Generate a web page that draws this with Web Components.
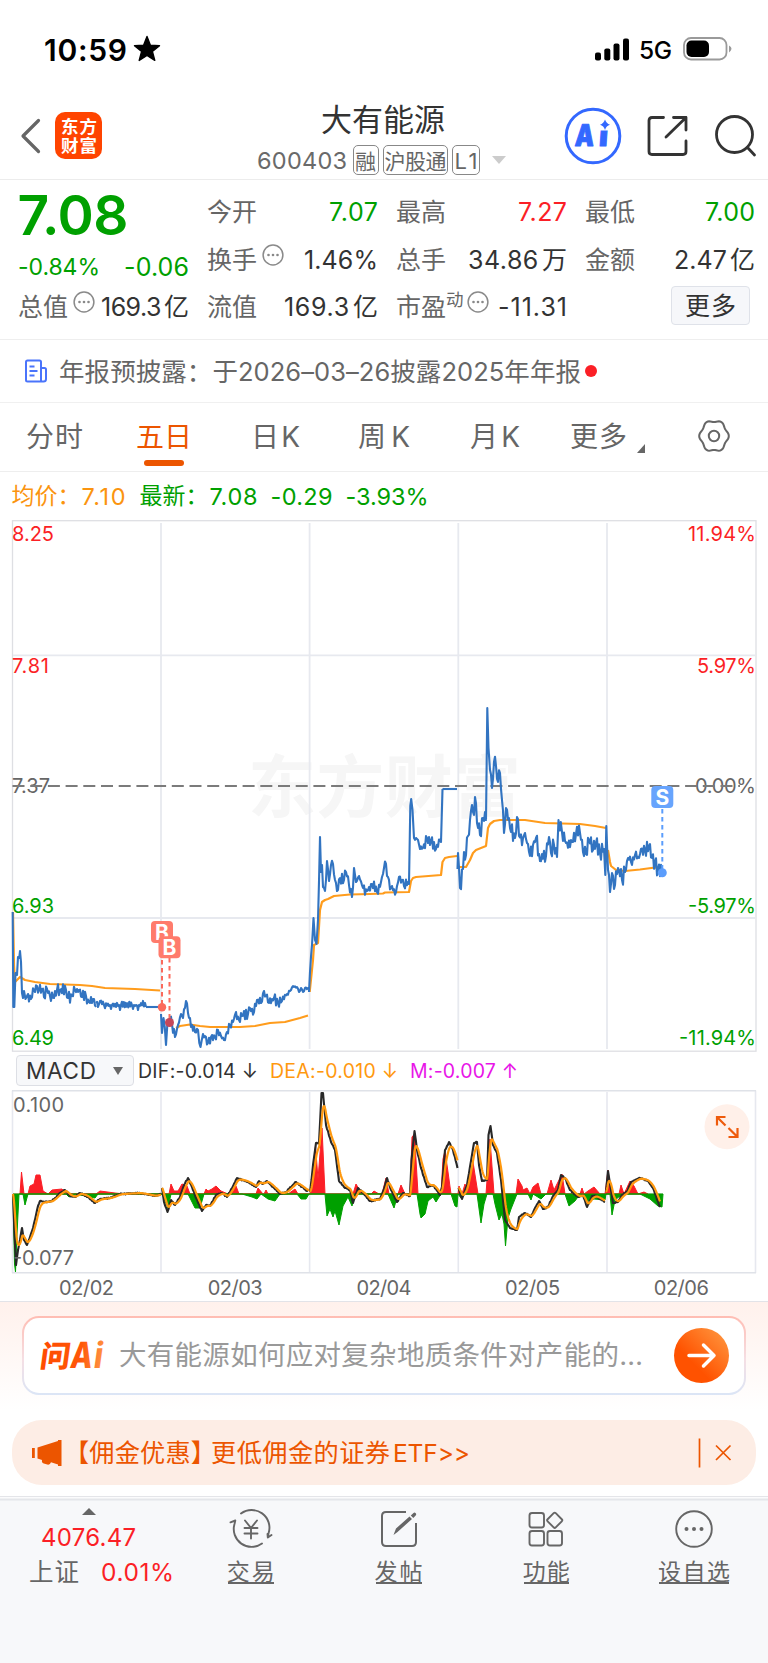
<!DOCTYPE html>
<html lang="zh-CN">
<head>
<meta charset="utf-8">
<title>大有能源 600403</title>
<style>
html,body{margin:0;padding:0;background:#fff}
body{width:768px;height:1663px;overflow:hidden;font-family:Inter,"Noto Sans CJK SC",sans-serif;color:#333;text-autospace:normal}
</style>
</head>
<body>
<stock-page></stock-page>
<script>
const define = (name, html, setup) => customElements.define(name, class extends HTMLElement {
  connectedCallback() {
    if (this.shadowRoot) return;
    this.attachShadow({mode: 'open'}).innerHTML = html;
    if (setup) setup.call(this, this.shadowRoot);
  }
});

/* Single line of text: s = size, w = ink width to justify to, c = colour, b = weight */
define('t-x', `<style>:host{display:block;flex:none;white-space:nowrap;line-height:1}span{display:inline-block;margin:1px 0 -1px -1px}</style><span><slot></slot></span>`, function (root) {
  const a = n => this.getAttribute(n);
  if (a('s')) this.style.fontSize = a('s') + 'px';
  if (a('s')) this.style.height = a('s') + 'px';
  if (a('c')) this.style.color = a('c');
  if (a('b')) this.style.fontWeight = a('b');
  if (a('w')) {
    const span = root.querySelector('span'), n = this.textContent.length, w = +a('w');
    span.style.letterSpacing = (w + 2 - span.getBoundingClientRect().width) / Math.max(1, n - 1) + 'px';
    this.style.width = w + 'px';
  }
});

define('status-bar', `<style>
:host{display:flex;align-items:center;height:97px;box-sizing:border-box;padding:1px 36px 0 45px;color:#000}
.star{margin-left:7px}.r{margin-left:auto;display:flex;align-items:center}
svg{display:block}</style>
<t-x s="30" w="81" b="600">10:59</t-x>
<svg class="star" width="28" height="28" viewBox="0 0 28 28"><path d="M14 1.5l3.3 8.6 9.2.5-7.1 5.8 2.4 9-7.8-5-7.8 5 2.4-9-7.1-5.8 9.2-.5z" stroke="#000" stroke-width="1.4" stroke-linejoin="round"/></svg>
<div class="r">
<svg width="34" height="23" viewBox="0 0 34 23"><rect y="14.500" width="6" height="8" rx="2"/><rect x="9.300" y="10.500" width="6" height="12" rx="2"/><rect x="18.500" y="5.500" width="6" height="17" rx="2"/><rect x="28" y=".5" width="6" height="22" rx="2"/></svg>
<t-x s="24.500" w="31" b="500" style="margin:1px 12px 0 11px">5G</t-x>
<svg width="49" height="24" viewBox="0 0 49 24"><rect x="1" y="1" width="42.500" height="21.500" rx="7" fill="none" stroke="#9a9a9a" stroke-width="1.800"/><rect x="3.500" y="3.600" width="22.500" height="16.300" rx="5"/><path d="M46 8.500q5 3 0 7z" fill="#9a9a9a"/></svg>
</div>`);

define('brand-logo', `<style>:host{display:grid;place-content:center;justify-items:center;gap:1.500px;width:47px;height:47px;border-radius:10px;background:#ff4400;color:#fff}t-x{margin:-.5px 0 .5px 1px}</style>
<t-x s="17.500" w="34" b="700">东方</t-x><t-x s="17.500" w="34" b="700">财富</t-x>`);

define('tag-box', `<style>:host{display:flex;align-items:center;justify-content:center;box-sizing:border-box;height:30px;border:1.500px solid #888;border-radius:5px;color:#666;margin-left:4px}</style><slot></slot>`);

define('title-bar', `<style>
:host{display:flex;height:83px;box-sizing:border-box;border-bottom:1.500px solid #ececec;align-items:flex-start;padding-left:20px}
svg{display:block;flex:none}.back{margin:21px 13px 0 0}brand-logo{margin-top:15px}
.mid{width:249px;margin-left:156px;padding-top:6px}.row{display:flex;align-items:center;margin-top:11px}
.ai{margin:10px 0 0 57px}.share{margin:18px 0 0 25px}.find{margin:17px 0 0 25px}</style>
<svg class="back" width="22" height="36" viewBox="0 0 22 36"><path d="M18.500 2.500L3 18l15.500 15.500" fill="none" stroke="#666" stroke-width="3.200" stroke-linecap="round" stroke-linejoin="round"/></svg>
<brand-logo></brand-logo>
<div class="mid"><t-x s="31" w="122" c="#333" style="margin-left:64px">大有能源</t-x>
<div class="row"><t-x s="23.500" w="88" c="#6a6a6a">600403</t-x><tag-box style="width:26px;margin-left:7px"><t-x s="21" w="20">融</t-x></tag-box><tag-box style="width:65px"><t-x s="21" w="60">沪股通</t-x></tag-box><tag-box style="width:28px"><t-x s="22" w="21">L1</t-x></tag-box><svg width="14" height="8" style="margin-left:12px" viewBox="0 0 14 8"><path d="M0 0h14L7 8z" fill="#ccc"/></svg></div></div>
<svg class="ai" width="58" height="58" viewBox="0 0 58 58"><circle cx="29" cy="29" r="26.800" fill="none" stroke="#3368ff" stroke-width="3"/><text transform="translate(10.500 39) skewX(-4)" font-family="Inter" font-weight="900" font-size="30" fill="#3368ff" stroke="#3368ff" stroke-width="1" stroke-linejoin="round"><tspan textLength="19" lengthAdjust="spacingAndGlyphs">A</tspan><tspan x="24">i</tspan></text><path d="M33 11h13v12.500H33z" fill="#fff"/><path d="M41 12.500q1.300 4.100 5 5.200-3.700 1.100-5 5.200-1.300-4.100-5-5.200 3.700-1.100 5-5.200z" fill="#3368ff"/></svg>
<svg class="share" width="42" height="42" viewBox="0 0 42 42"><g fill="none" stroke="#333" stroke-width="2.800" stroke-linecap="round" stroke-linejoin="round"><path d="M16.500 2.500H5q-3 0-3 3v31q0 3 3 3h31q3 0 3-3V26"/><path d="M26.500 2.500H39V15M39 2.500L19 22"/></g></svg>
<svg class="find" width="44" height="44" viewBox="0 0 44 44"><g fill="none" stroke="#333" stroke-width="2.800" stroke-linecap="round"><circle cx="20.500" cy="20.500" r="18"/><path d="M33.500 33.500l7 7.500"/></g></svg>`);

define('info-dot', `<style>:host{display:block;flex:none;width:22px;height:22px}svg{display:block}</style><svg width="22" height="22" viewBox="0 0 22 22"><circle cx="11" cy="11" r="9.900" fill="none" stroke="#8a8a8a" stroke-width="1.500"/><g fill="#888"><circle cx="6.500" cy="11" r="1.300"/><circle cx="11" cy="11" r="1.300"/><circle cx="15.500" cy="11" r="1.300"/></g></svg>`);

define('quote-cell', `<style>:host{display:flex;align-items:center;height:47.500px}.v{margin-left:auto}</style><slot name="k"></slot><slot name="x"></slot><div class="v"><slot></slot></div>`);

define('quote-panel', `<style>
:host{display:block;height:160px;box-sizing:border-box;border-bottom:1.500px solid #eee;padding:8px 14px 0 19px}
.g{display:grid;grid-template-columns:169px 169px 169px 168px;column-gap:20px}
.p{display:flex;justify-content:space-between}
info-dot{margin:-9px 0 0 6px}
.btn{width:79px;height:39px;box-sizing:border-box;border:1.500px solid #dfe2e9;border-radius:4px;background:#f6f7fa;display:grid;place-items:center;margin:-2px 4px 0 0}</style>
<div class="g">
<div><t-x s="55" w="109" b="600" c="#00a000" style="margin:-1px 0 0 -.5px">7.08</t-x><div class="p" style="height:26px;align-items:center;margin-top:11px"><t-x s="23" w="80" c="#00a000">-0.84%</t-x><t-x s="25" w="63" c="#00a000">-0.06</t-x></div>
<quote-cell style="margin-top:3.500px"><t-x slot="k" s="25" w="48" c="#666">总值</t-x><info-dot slot="x" style="margin-left:6px"></info-dot><t-x s="25" w="86">169.3亿</t-x></quote-cell></div>
<div><quote-cell><t-x slot="k" s="25" w="48" c="#666">今开</t-x><t-x s="25" w="47" c="#00a000">7.07</t-x></quote-cell>
<quote-cell><t-x slot="k" s="25" w="48" c="#666">换手</t-x><info-dot slot="x"></info-dot><t-x s="25" w="72">1.46%</t-x></quote-cell>
<quote-cell><t-x slot="k" s="25" w="48" c="#666">流值</t-x><t-x s="25" w="92">169.3亿</t-x></quote-cell></div>
<div><quote-cell><t-x slot="k" s="25" w="48" c="#666">最高</t-x><t-x s="25" w="47" c="#fb1f26">7.27</t-x></quote-cell>
<quote-cell><t-x slot="k" s="25" w="48" c="#666">总手</t-x><t-x s="25" w="97">34.86万</t-x></quote-cell>
<quote-cell><t-x slot="k" s="25" w="48" c="#666">市盈</t-x><t-x slot="x" s="17.500" w="17" c="#666" style="margin:-17px 0 0 2px">动</t-x><info-dot slot="x" style="margin-left:3px"></info-dot><t-x s="25" w="67">-11.31</t-x></quote-cell></div>
<div><quote-cell><t-x slot="k" s="25" w="48" c="#666">最低</t-x><t-x s="25" w="48" c="#00a000">7.00</t-x></quote-cell>
<quote-cell><t-x slot="k" s="25" w="48" c="#666">金额</t-x><t-x s="25" w="79">2.47亿</t-x></quote-cell>
<quote-cell><div class="btn"><t-x s="25" w="49">更多</t-x></div></quote-cell></div>
</div>`);

define('notice-line', `<style>:host{display:flex;align-items:center;height:62.500px;box-sizing:border-box;border-bottom:1.500px solid #f0f0f0;padding-left:24px;text-autospace:no-autospace}i{width:12px;height:12px;border-radius:6px;background:#fb1f26;margin:0 0 0 5px}</style>
<svg width="24" height="24" viewBox="0 0 24 24"><g fill="none" stroke="#4a74fb" stroke-width="2"><path d="M17 22.500H3.500q-1.500 0-1.500-1.500V3q0-1.500 1.500-1.500h12Q17 1.500 17 3zM17 9h3.500q1.500 0 1.500 1.500V20q0 2.500-2.500 2.500H17M5.500 7.500h5M5.500 12h8M5.500 16.500h5"/></g></svg>
<t-x s="25.500" w="520" c="#666" style="margin:-1px 0 0 12px">年报预披露：于2026–03–26披露2025年年报</t-x><i></i>`);

define('tab-item', `<style>:host{display:flex;flex-direction:column;align-items:center;flex:none;padding-top:19.500px}:host([on])::after{content:"";width:40px;height:6px;border-radius:3px;background:#ec5500;margin-top:9.500px}</style><slot></slot>`);

/* Gear outline with six soft lobes */
const gear = Array.from({length: 73}, (_, i) => {
  const t = i * Math.PI / 36, r = 13.8 + 1 * Math.cos(6 * t);
  return (17 + r * Math.cos(t)).toFixed(2) + ' ' + (17 + 1.09 * r * Math.sin(t)).toFixed(2);
}).join('L');

define('period-tabs', `<style>:host{display:flex;align-items:flex-start;height:69px;box-sizing:border-box;border-bottom:1.500px solid #eee;padding-left:27px;color:#666}tab-item+tab-item{margin-left:var(--g)}.tri{margin:41px 0 0 11px}.gear{margin:16.500px 0 0 52px}svg{display:block}</style>
<tab-item><t-x s="28" w="55">分时</t-x></tab-item>
<tab-item on style="--g:55px"><t-x s="28" w="54" c="#ec5500">五日</t-x></tab-item>
<tab-item style="--g:61px"><t-x s="28" w="47">日K</t-x></tab-item>
<tab-item style="--g:60px"><t-x s="28" w="50">周K</t-x></tab-item>
<tab-item style="--g:62px"><t-x s="28" w="48">月K</t-x></tab-item>
<tab-item style="--g:52px"><t-x s="28" w="55">更多</t-x></tab-item>
<svg class="tri" width="8" height="9" viewBox="0 0 8 9"><path d="M8 0v9H0z" fill="#666"/></svg>
<svg class="gear" width="34" height="34" viewBox="0 0 34 34"><g fill="none" stroke="#666" stroke-width="2"><path d="M${gear}Z"/><circle cx="17" cy="17" r="5.200"/></g></svg>`);

define('price-legend', `<style>:host{display:flex;align-items:center;height:48.500px;padding-left:12.500px;color:#00a000}</style>
<t-x s="23" w="67" c="#fb940f">均价：</t-x><t-x s="23.500" w="42" c="#fb940f" style="margin-left:3px">7.10</t-x>
<t-x s="23" w="67" style="margin-left:16px">最新：</t-x><t-x s="23.500" w="46" style="margin-left:3px">7.08</t-x><t-x s="23.500" w="60" style="margin-left:15px">-0.29</t-x><t-x s="23.500" w="81" style="margin-left:15px">-3.93%</t-x>`);

const parse = s => s.trim().split(/\s+/).map(p => p.split(',').map(Number));
const pts = a => a.map(p => p[0].toFixed(1) + ',' + p[1].toFixed(1)).join(' ');
let seed = 7;
const rnd = () => (seed = (seed * 16807) % 2147483647) / 2147483647;
/* Fill the gaps between the known ticks with small minute-by-minute moves */
const ticks = (s, amp) => {
  const k = parse(s), out = [k[0]];
  let sign = 1;
  for (let i = 1; i < k.length; i++) {
    const [x0, y0] = k[i - 1], [x1, y1] = k[i], n = Math.floor((x1 - x0) / .9);
    for (let j = 1; j < n; j++) {
      sign = -sign;
      out.push([x0 + (x1 - x0) * j / n, y0 + (y1 - y0) * j / n + sign * rnd() * amp * .7]);
    }
    out.push(k[i]);
  }
  return out;
};
const line = (a, c, w) => `<polyline points="${pts(a)}" fill="none" stroke="${c}" stroke-width="${w}" stroke-linejoin="round"/>`;

const PRICE = [
  ['12.7,912 13.3,1007 14.3,1007 15.5,973 17,975 18,957 19.2,958 20,951 21,962 22,993 23,998 24,991 25.5,999 28,994 31,999 34,990 37,986 39,990 42,989 44,997 47,989 50,996 54,998 57,990 60,990 66,990 68,998 72,996 75,990 79,990 82,997 86,996 89,1002 93,999 96,1007', 9],
  ['96,1003 98,1007 100,1001 104,1005 110,1005 111,1009 112,1005 119,1005 120,1010 121,1005 132,1005 133,1009 134,1005 136,1005 138,1010 139,1005 145,1003 146,1007', 5],
  ['146,1007 160,1007', 0],
  ['161,1014 162,1033 163.5,1018 166,1045 167.5,1022 170,1018 172,1024 175,1037 178,1025 181,1014 183,1018 186,1001 188,1013 190,1018 191,1027 195,1032 198,1030 200.5,1047 203,1034 206,1037 208,1043 212,1035 215,1037 218,1030 221,1036 224,1040 227,1032 230,1025 233,1022 236,1012 239,1020 242,1016 248,1014 250,1008 254,1012 257,1000 261,1003 264,991 266,996 269,1003 274,998 278,1003 282,1001 286,996', 7],
  ['286,996 290,991 293,986 297,987 299,992 301,988 303,992 305,988 309,988', 2],
  ['309,992 310,972 312,945 313.5,918 315,940 316.5,944 318,920 320,837 321,872 322,865 323,887 325,891 327,861 329,881 331,865 333,864 335,880 338,890 340,878 344,880 346,872 349,885 352,897 354,868 356,882 359,876 363,888 367,891 372,884 377,892 381,882 384,868 386,864 388,877 391,888 396,892 399,877 402,880 404,886 409,884 410.3,806 411.2,799 412.5,810 414,838 416,838 418,840 420,849 423,848 427,838 431,841 436,849 440,840 441,842 442.5,789', 8],
  ['442.5,789 457,789', 0],
  ['457.5,869 458,853 460,888 463,869 464,852 466,855 468,836 470,820 472,805 474,815 475,797 477,823 480,835 483,818 485,812 486,820 487.3,708 488.5,748 490,770 492,788 494,762 496,766 498,782 500,773 502,800 504,833 506,808 510,828 515,838 517,817 519,836 523,838 525,833 527,843 530,856 533,845 536,838 540,861 546,856 549,837 551,853 554,845 557,857 558.5,820 562,832 566,843 572,842 576,834 580,833 583,852 586,854 589,840 593,850 596,843 600,853 604,849 605.3,875 606.3,826 608,870 610,892 612,873 615,885 618,868 622,880 625,872 628,858 631,862 635,855 639,858 641,849 645,850 649,846 652,858 655,862 658,870 662,872', 12]
];
const AVERAGE = [
  '13,912 14,965 15,982 18,979 20,977 25,980 35,982 50,984 80,985 92,986 105,988 135,989 160,990.5',
  '176,1028 180,1026 190,1024.5 200,1026 210,1027 240,1027 255,1026 270,1023 285,1022 300,1018 308,1015.5',
  '309.7,992 313,960 314,945 318,943 320,910 322,902 325,900 328,899 334,896 350,894.5 370,894 383,893.5 385,892.5 409,892 411,881 413,878 416,877 441,875 442.5,862 445,858 449,857 457,856',
  '458,867 466,867 470,860 473,853 476,850 486,846 488,828 490,824 494,821 500,820 525,820 545,823 580,824 595,826 606,828',
  '608,850 610,862 611,866 616,870 625,871 640,869.5 655,867.5 660,868'
];
const label = (x, y, t, c, w, end, s = 20) => `<text x="${x}" y="${y}" fill="${c}" font-size="${s}" textLength="${w}" ${end ? 'text-anchor="end"' : ''}>${t}</text>`;
const R = '#fb1f26', G = '#00a000', D = '#666';

define('price-chart', `<style>:host{display:block;height:532px}svg{display:block}text{font-family:Inter,"Noto Sans CJK SC",sans-serif}</style>
<svg width="768" height="532" viewBox="0 520 768 532">
<text x="248" y="812" font-size="68" font-weight="700" textLength="273" fill="#f6f6f6">东方财富</text>
<g fill="none" stroke="#e7e9ef" stroke-width="1.800"><rect x="12.500" y="520.700" width="743.500" height="530.500" stroke="#dedfe3" stroke-width="1.300"/><path d="M161 523v526M309.600 523v526M458.300 523v526M607 523v526M13 655.300h742M13 918h742"/></g>
${label(12, 540.5, '8.25', R, 42)}${label(12, 673, '7.81', R, 37)}${label(12, 793, '7.37', D, 38)}${label(12, 912.5, '6.93', G, 42)}${label(12, 1044.5, '6.49', G, 42)}
${label(756, 540.5, '11.94%', R, 68, 1)}${label(756, 673, '5.97%', R, 59, 1)}${label(756, 793, '0.00%', D, 61, 1)}${label(756, 912.5, '-5.97%', G, 68, 1)}${label(756, 1044.5, '-11.94%', G, 77, 1)}
<path d="M12.500 786H740" stroke="#7b7b7b" stroke-width="2.200" stroke-dasharray="12 5.700"/>
${AVERAGE.map(a => line(parse(a), '#ff9c1c', 2.2)).join('')}
${PRICE.map(p => line(ticks(p[0], p[1]), '#3274c1', 2.1)).join('')}
<g stroke="#fb6a5c" stroke-width="2" stroke-dasharray="4.500 3.500"><path d="M162 944v60M169.500 958v62"/></g>
<circle cx="162" cy="1007.300" r="4.200" fill="#fb6a5c"/><circle cx="169.500" cy="1022.500" r="4.500" fill="#c4485a"/>
<g font-size="21" font-weight="700" text-anchor="middle"><rect x="151" y="921" width="22" height="22" rx="4" fill="#ff7b6c"/><text x="162" y="939.500" fill="#fff">B</text><rect x="158.500" y="936.300" width="22" height="22" rx="4" fill="#ff7b6c"/><text x="169.500" y="955" fill="#fff">B</text>
<path d="M662.300 809v60" stroke="#5b9dfc" stroke-width="2" stroke-dasharray="4.500 3.500"/><circle cx="662.300" cy="872.700" r="4.500" fill="#5b9dfc"/><rect x="651.300" y="786" width="22" height="22" rx="4" fill="#67a4fd"/><text x="662.300" y="804.700" fill="#fff">S</text></g>
</svg>`);

define('macd-legend', `<style>:host{display:flex;align-items:center;height:38px;padding-left:16px}.sel{display:flex;align-items:center;justify-content:space-between;box-sizing:border-box;width:118px;height:31px;padding:0 10px;border:1.300px solid #dddfe5;border-radius:4px;background:#f7f8fa;margin:-1px 5px 0 0}svg{display:block}</style>
<div class="sel"><t-x s="22.500" w="68">MACD</t-x><svg width="10" height="8" viewBox="0 0 10 8"><path d="M0 0h10L5 8z" fill="#666"/></svg></div>
<t-x s="19.500" w="118">DIF:-0.014 ↓</t-x><t-x s="19.500" w="126" c="#ff990f" style="margin-left:14px">DEA:-0.010 ↓</t-x><t-x s="19.500" w="106" c="#e815e8" style="margin-left:14px">M:-0.007 ↑</t-x>`);

const DIF = [
  '13,1194 14.5,1235 16,1265 18,1250 20,1240 22,1228 24,1240 27,1245 30,1237 33,1228 36,1215 38,1206 40,1201 45,1202 52,1201 60,1193 65,1190 70,1196 75,1197 80,1193 88,1197 95,1203 100,1199 110,1198 120,1194 140,1193 155,1196 161,1194',
  '162,1188 164,1202 167.5,1212 171,1200 175,1205 180,1197 184,1185 188,1178 192,1187 196,1198 202,1211 206,1205 210,1206 216,1195 222,1193 227,1197 232,1188 237,1178 248,1182 256,1187 259,1181 263,1184 267,1181 273,1187 280,1194 286,1192 292,1186 296,1182 302,1187 307,1191 309,1190',
  '310,1192 311.5,1180 313,1165 316,1143 319,1143 321.5,1093 323,1093 326,1125 331,1142 335,1150 339,1181 344,1187 350,1190 353,1203 358,1188 363,1193 370,1201 380,1199 384,1189 387,1178 391,1190 397,1202 403,1193 410,1196 411.5,1160 414.5,1131 417,1150 421,1168 427,1187 433,1185 440,1195 442,1187 445,1150 449,1142 453,1150 457.5,1168',
  '458.5,1188 462,1199 467,1185 472,1155 474,1143 477,1142 479,1165 482,1181 487,1180 488.5,1135 490.5,1126 493,1145 497,1153 501,1180 505,1220 510,1228 517,1230 519,1217 525,1213 531,1217 535,1208 539,1201 543,1209 548,1207 553,1196 558,1190 561,1175 565,1178 570,1190 578,1197 583,1195 587,1207 592,1196 596,1196 605,1202',
  '606,1192 608,1171 611,1190 613,1203 618,1202 622,1195 627,1192 631,1182 640,1178 648,1181 653,1188 660,1207'
];
/* Signal line: running average of the fast line */
const signal = a => {
  const k = parse(a), out = [];
  let e = k[0][1], i = 0;
  for (let x = k[0][0]; x <= k[k.length - 1][0]; x += .5) {
    while (i < k.length - 2 && k[i + 1][0] < x) i++;
    const [x0, y0] = k[i], [x1, y1] = k[i + 1];
    e += ((y0 + (y1 - y0) * (x - x0) / (x1 - x0)) - e) * .19;
    out.push([x, e]);
  }
  return out;
};
const RED = '20,0 21.5,-22 24,0 28,0 30,-8 34,-10 36,-19 40,-19 43,-3 48,0 52,-4 62,-5 67,0 96,0 100,-3 115,-1 125,0 169,0 171,-10 174,-3 178,-3 182,-10 187,-8 190,0 204,0 206,-5 208,-3 212,-5 216,-8 221,-3 228,0 232,-6 236,-8 239,0 256,0 258,-6 263,0 264,0 266,-4 268,0 288,0 295,-5 298,0 310,0 315.5,-48 318,-15 322,-66 325,0 353,0 356,-10 360,-3 363,0 371,0 374,-3 379,0 382,0 386,-16 389,0 398,0 401,-9 405,0 410,0 412,-57 414.5,-60 418,0 441,0 443,-35 445,-43 448,-22 451,0 458,0 459,-8 462,0 465,-10 467,-5 473,-32 478,0 486,0 490,-55 494,0 516,0 518,-15 522,-8 523,-4 527,-6 530,0 533,-7 538,-11 541,0 547,0 551,-14 554,-4 557,-10 562,-20 565,0 580,0 582,-6 584,0 588,-3 594,-7 600,0 605,0 608,-24 611,0 619,0 621,-9 624,0 630,-13 634,-8 638,0 644,-2 648,0';
const GREEN = '13,0 14.5,70 15.5,78 17,40 19,0 23,0 25,11 28,0 66,0 69,3 75,0 85,2 95,4 98,0 162,0 164,5 168,14 171,0 188,0 195,14 200,14 204,0 242,0 252,3 257,5 261,0 268,5 275,7 280,0 297,0 301,5 306,5 309,0 325,0 327,22 330,15 333,23 335,17 339,31 343,12 348,3 352,12 355,0 388,0 394,14 398,0 417,0 420,20 421,24 425,20 428,7 433,3 436,8 441,0 451,0 455,12 457,13 458,0 461,4 464,0 477,0 481,29 484,10 487,0 493,0 495,10 499,26 502,20 504,30 505.5,52 508,24 511,15 517,0 528,0 531,6 533,0 541,5 546,0 565,0 569,12 575,7 580,0 585,3 588,7 594,5 605,6 606,0 610,0 612,21 615,6 620,2 624,0 640,0 650,5 658,12 662,13 663,0';
const area = (s, c) => { const a = parse(s).map(p => [p[0], 1194 + p[1]]); return `<polygon points="${pts(a)}" fill="${c}" stroke="${c}" stroke-width="1"/>`; };
define('macd-chart', `<style>:host{display:block;height:211px}svg{display:block}text{font-family:Inter,sans-serif}</style>
<svg width="768" height="211" viewBox="0 1090 768 211">
<g fill="none" stroke="#dfe2e8" stroke-width="1.600"><path d="M12.500 1090.500V1273M755.500 1090.500V1273M161 1092v180M309.600 1092v180M458.300 1092v180M607 1092v180" stroke="#e6e8ef"/><path d="M12 1090.800h744M12 1272.700h744"/></g>
${label(13, 1112, '0.100', D, 51)}
<path d="M13 1194h299" stroke="#fb1f26" stroke-width=".7"/><path d="M312 1194h351" stroke="#999" stroke-width=".6"/>
${area(RED, '#fb1f26')}${area(GREEN, '#00a000')}
${DIF.map(a => line(ticks(a, 1), '#282828', 2.1)).join('')}${DIF.map(a => line(signal(a), '#ff990f', 2.2)).join('')}
${label(13, 1265, '-0.077', D, 61)}
${['02/02', '02/03', '02/04', '02/05', '02/06'].map((t, i) => label(59 + 148.7 * i, 1295, t, D, 55)).join('')}
<circle cx="727" cy="1126.700" r="22.500" fill="#fff0e9"/><g fill="none" stroke="#ee5b0c" stroke-width="2.200"><path d="M725.500 1117h-8.500v8.500M717 1117l8.500 8.500M728.500 1137h9v-9M737.500 1137l-9-9"/></g>
</svg>`);

define('ask-ai', `<style>
:host{display:block;height:119px;box-sizing:border-box;border-top:1.500px solid #e2e3e8;padding:13.500px 22px 0;background:linear-gradient(#fff1ec,#fff 92%)}
.b{height:79px;box-sizing:border-box;border:2px solid transparent;border-radius:17px;background:linear-gradient(#fff,#fff) padding-box,linear-gradient(#ffbdb3,#f5dfe4 55%,#dbe5f6) border-box;display:flex;align-items:center;padding-left:15px}svg{display:block;flex:none;overflow:visible}</style>
<div class="b">
<svg width="66" height="30" viewBox="0 0 66 30"><defs><linearGradient id="g" gradientUnits="userSpaceOnUse" x1="0" x2="66"><stop offset="0" stop-color="#ff4b00"/><stop offset=".6" stop-color="#ff5708"/><stop offset="1" stop-color="#ff9b4a"/></linearGradient></defs>
<g fill="url(#g)" font-family='Inter,"Noto Sans CJK SC",sans-serif' font-weight="900"><text transform="translate(0 27) skewX(-8)"><tspan font-size="30">问</tspan><tspan font-size="36" font-weight="800" x="30.500" y="1.300" textLength="22" lengthAdjust="spacingAndGlyphs">A</tspan><tspan font-size="36" font-weight="700" x="53.500" y="1.300">i</tspan></text></g></svg>
<t-x s="27.500" w="522" c="#999" style="margin-left:15px">大有能源如何应对复杂地质条件对产能的…</t-x>
<svg width="55" height="55" style="margin-left:32px" viewBox="0 0 55 55"><defs><linearGradient id="h" x1="0" y1="1" x2="1" y2="0"><stop offset=".35" stop-color="#ff5200"/><stop offset="1" stop-color="#ff9d45"/></linearGradient></defs><circle cx="27.500" cy="27.500" r="27.500" fill="url(#h)"/><path d="M15 27.500h25M29.500 17l10.500 10.500L29.500 38" fill="none" stroke="#fff" stroke-width="3.500" stroke-linecap="round" stroke-linejoin="round"/></svg>
</div>`);

define('promo-banner', `<style>:host{display:flex;align-items:center;height:65px;margin:0 12px 11px;border-radius:30px;background:#fdede5;color:#ec5500;padding-left:19px}svg{display:block;flex:none}</style>
<svg width="32" height="26" viewBox="0 0 32 26"><g fill="#ec5500"><path d="M1 8h2.800v10H1zM6.500 7.500L27 1V0h3.500v26H27v-1.500l-7-2.200q-1 3-3.700 2.300l-3.500-1q-2.400-.8-1.800-3.600L6.500 18.500z"/></g></svg>
<t-x s="25.200" w="150" style="margin-left:2px">【佣金优惠】</t-x>
<t-x s="25.200" w="177" style="margin-left:-3px">更低佣金的证券</t-x><t-x s="24.500" w="75" style="margin-left:5px">ETF&gt;&gt;</t-x>
<svg width="34" height="30" viewBox="0 0 34 30" style="margin-left:229px"><g stroke="#ec5500" stroke-width="1.700"><path d="M1.500 .5v29M18 7.500l14.500 14.500M32.500 7.500L18 22"/></g></svg>`);

define('nav-item', `<style>:host{display:flex;flex-direction:column;align-items:center;padding-top:9px;color:#666}.l{margin-top:10.500px;height:22.500px;border-bottom:2px solid #666}</style><slot name="i"></slot><div class="l"><slot></slot></div>`);

define('bottom-nav', `<style>
:host{display:grid;grid-template-columns:177px repeat(4,147.700px);height:167px;box-sizing:border-box;background:#f7f8fa;border-top:1.300px solid #e4e5e9;box-shadow:inset 0 1.500px #fbfbfc,inset 0 3.500px #e4e6ea;padding-top:3px}
svg{display:block}.q{display:flex;flex-direction:column;align-items:center;padding-top:8px}.r{display:flex;gap:24px;margin:10px 0 0 26px;align-items:center}</style>
<div class="q"><svg width="14" height="7" viewBox="0 0 14 7"><path d="M0 7h14L7 0z" fill="#666"/></svg><t-x s="24" w="93" c="#fb1f26" style="margin-top:10px">4076.47</t-x><div class="r"><t-x s="24.500" w="48" c="#666">上证</t-x><t-x s="24.500" w="71" c="#fb1f26">0.01%</t-x></div></div>
<nav-item><svg slot="i" width="46" height="40" viewBox="0 0 46 40"><g fill="none" stroke="#666" stroke-width="1.900" stroke-linecap="round" stroke-linejoin="round"><path d="M13 4.500A17.800 17.800 0 0 1 40.500 24.500L39.800 28.500L43.500 26M39.800 28.500L39.500 25M34 34.500A17.800 17.800 0 0 1 6.500 15L7.300 11.500L2.500 13.300"/><path d="M17 11.500l6 7.500 6-7.500M16.500 19h13M16.500 24.500h13M23 19v10.500"/></g></svg><t-x s="23" w="46">交易</t-x></nav-item>
<nav-item><svg slot="i" width="40" height="40" viewBox="0 0 40 40"><path d="M27 3H7Q3 3 3 7v26q0 4 4 4h26q4 0 4-4V14" fill="none" stroke="#666" stroke-width="2"/><path d="M14.500 26L17 19.500 30.500 7.500 33 10 18.500 23zM31.800 6.500L34.500 4q1-1 2.200.2 1 1.200 0 2.200L34.300 9z" fill="#666"/></svg><t-x s="23" w="46">发帖</t-x></nav-item>
<nav-item><svg slot="i" width="40" height="40" viewBox="0 0 40 40"><g fill="none" stroke="#666" stroke-width="1.900"><rect x="3.500" y="4" width="14.500" height="14.500" rx="2.500"/><rect x="3.500" y="22" width="14.500" height="14.500" rx="2.500"/><rect x="21.500" y="22" width="14.500" height="14.500" rx="2.500"/><rect x="23" y="5.500" width="11.500" height="11.500" rx="1.500" transform="rotate(45 28.700 11.200)"/></g></svg><t-x s="23" w="45">功能</t-x></nav-item>
<nav-item><svg slot="i" width="40" height="40" viewBox="0 0 40 40"><circle cx="20" cy="20" r="17.800" fill="none" stroke="#666" stroke-width="1.900"/><g fill="#666"><circle cx="12.500" cy="20" r="2"/><circle cx="20" cy="20" r="2"/><circle cx="27.500" cy="20" r="2"/></g></svg><t-x s="23" w="70">设自选</t-x></nav-item>`);

define('stock-page', `<style>:host{display:block;width:768px;height:1663px;background:#fff;overflow:hidden}</style>
<status-bar></status-bar><title-bar></title-bar><quote-panel></quote-panel><notice-line></notice-line><period-tabs></period-tabs><price-legend></price-legend><price-chart></price-chart><macd-legend></macd-legend><macd-chart></macd-chart><ask-ai></ask-ai><promo-banner></promo-banner><bottom-nav></bottom-nav>`);
</script>
</body>
</html>
